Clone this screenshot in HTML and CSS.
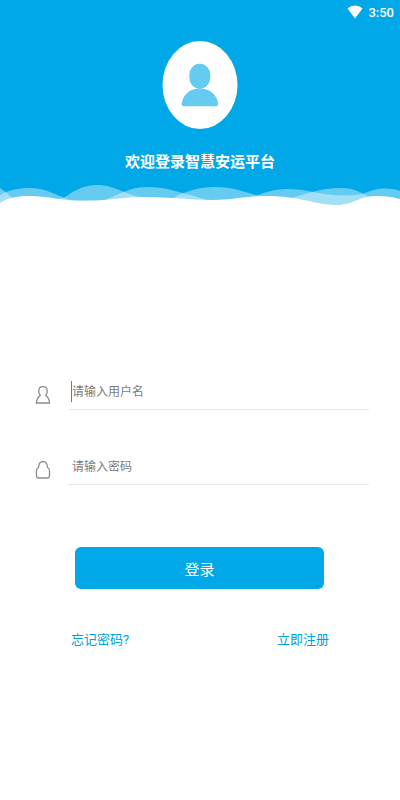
FILE: index.html
```html
<!DOCTYPE html>
<html lang="zh-CN">
<head>
<meta charset="utf-8">
<meta name="viewport" content="width=device-width, initial-scale=1">
<title>智慧安运平台</title>
<link rel="stylesheet" href="styles.css">
</head>
<body>
<header class="hero">
  <div class="status">
    <svg class="wifi" viewBox="0 0 16 14" aria-hidden="true"><path d="M.5 3.400Q3.600 .5 8 .5T15.500 3.400L8 13.500Z" fill="#fff"/></svg>
    <time>3:50</time>
  </div>
  <svg class="avatar" viewBox="0 0 76 88" aria-hidden="true">
    <ellipse cx="38" cy="44" rx="37.500" ry="44" fill="#fff"/>
    <rect x="27.300" y="22.700" width="21" height="25" rx="10" ry="11.500" fill="#66cbf0"/>
    <path d="M21.500 65.300Q19.500 65.300 19.700 62.500C21 53.500 28 47.500 37.800 47.500S55 53.500 56 62.500Q56.200 65.300 54.200 65.300Z" fill="#66cbf0"/>
  </svg>
  <h1 class="title">欢迎登录智慧安运平台</h1>
  <svg class="waves" viewBox="0 0 400 30" preserveAspectRatio="none" aria-hidden="true">
    <path fill="#fff" fill-opacity=".4" d="M0 8Q5 11 11 17L20 20H44C52 17 58 21 65 17C76 9 86 5 97 5C115 5 125 15 145 18H173C185 12 196 7 215 7C237 7 247 14 262 16Q278 22 295 17C312 12 323 8 340 8C355 8 362 13 371 18L400 30H0Z"/>
    <path fill="#fff" fill-opacity=".4" d="M0 15C9 10 18 8 29 8C47 8 55 15 70 20H105C119 15 129 7 147 7C166 7 178 12 194 16L210 21H240C257 17 267 9 287 9C302 9 311 12 325 14Q348 17 362 14C378 8 387 7 400 11V30H0Z"/>
    <path fill="#fff" d="M0 23C8 18 16 16 28 16C50 16 61 21 83 21C108 21 119 17 145 17C171 17 190 20 212 20C235 20 245 16 267 16C300 16 315 25 337 25C353 25 359 16 377 16Q390 16 400 19V30H0Z"/>
  </svg>
</header>
<main>
  <form class="login">
    <div class="field">
      <label for="user" aria-label="用户名">
        <svg class="icon" viewBox="0 0 16 20" aria-hidden="true"><path d="M5.200 10.500C4 9 3.600 7.500 3.800 5.500C4 3 5.600 1.700 8 1.700S12 3 12.200 5.500C12.400 7.500 12 9 10.800 10.500C13.500 12.500 14.500 14.500 14.500 18H1.500C1.500 14.500 2.500 12.500 5.200 10.500Z"/></svg>
      </label>
      <div class="entry focused"><input id="user" type="text" placeholder="请输入用户名"></div>
    </div>
    <div class="field">
      <label for="pass" aria-label="密码">
        <svg class="icon" viewBox="0 0 16 20" aria-hidden="true"><path d="M3.500 7.500C3.700 4 5.300 1.500 8 1.500S12.300 4 12.500 7.500Q14.500 8.500 14.500 10.500V15.500Q14.500 18 12.300 18H3.700Q1.500 18 1.500 15.500V10.500Q1.500 8.500 3.500 7.500Z"/></svg>
      </label>
      <div class="entry"><input id="pass" type="password" placeholder="请输入密码"></div>
    </div>
    <button class="submit" type="submit">登录</button>
    <nav class="links"><a href="#forgot">忘记密码?</a><a href="#register">立即注册</a></nav>
  </form>
</main>
</body>
</html>
```
FILE: styles.css
```css
* { box-sizing: border-box; }
body {
  margin: 0;
  background: #fff;
  font-family: Roboto, "Noto Sans CJK SC", sans-serif;
}
.hero {
  display: flex;
  flex-direction: column;
  align-items: center;
  background: #00a8e8;
}
.status {
  align-self: stretch;
  display: flex;
  justify-content: flex-end;
  align-items: center;
  gap: 5px;
  height: 24px;
  padding-right: 6px;
  color: #fff;
  font-size: 13px;
  font-weight: 500;
}
.wifi { width: 16px; height: 14px; }
.avatar { width: 76px; height: 88px; margin-top: 17px; }
.title {
  margin: 21px 0 6px;
  color: #fff;
  font-size: 15px;
  line-height: 24px;
  font-weight: 700;
}
.waves { display: block; width: 100%; height: 30px; }
.login { padding: 164px 31px 0 35px; }
.field {
  display: flex;
  align-items: center;
  gap: 17px;
  height: 36px;
  margin-bottom: 39px;
}
.field label { display: flex; padding-top: 6px; }
.icon {
  width: 16px;
  height: 20px;
  fill: none;
  stroke: #8c8c8c;
  stroke-width: 1.3;
}
.entry {
  flex: 1;
  display: flex;
  align-items: center;
  height: 36px;
  padding-left: 3px;
  border-bottom: 1px solid #e8e8e8;
}
.entry::before {
  content: "";
  width: 1px;
  height: 21px;
}
.focused::before { background: #777; }
.entry input {
  flex: 1;
  min-width: 0;
  height: 34px;
  padding: 0;
  border: 0;
  outline: 0;
  background: none;
  font: inherit;
  font-size: 12px;
}
.entry input::placeholder { color: #7c7c7c; opacity: 1; }
.submit {
  display: block;
  width: calc(100% - 85px);
  height: 42px;
  margin: 62px 0 0 40px;
  padding: 0;
  border: 0;
  border-radius: 6px;
  background: #00a8e8;
  color: #fff;
  font: inherit;
  font-size: 15px;
}
.links {
  display: flex;
  justify-content: space-between;
  margin: 40px 40px 0 36px;
  font-size: 13px;
  line-height: 22px;
}
.links a { color: #00a0dc; text-decoration: none; }
```
